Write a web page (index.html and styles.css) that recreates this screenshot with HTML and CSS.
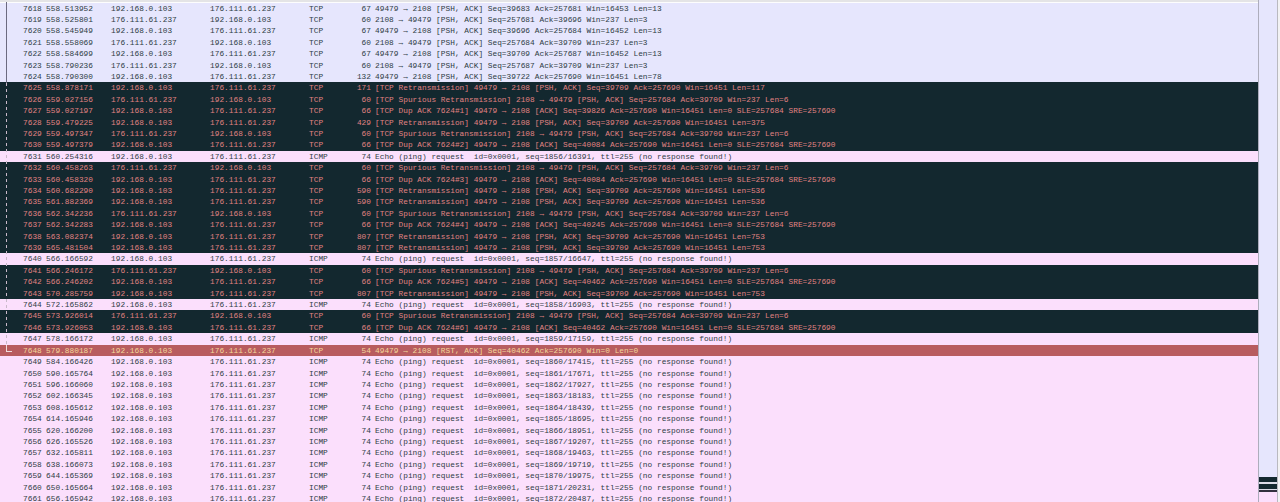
FILE: index.html
```html
<!DOCTYPE html>
<html lang="en">
<head>
<meta charset="utf-8">
<title>Packet list</title>
<link rel="stylesheet" href="styles.css">
</head>
<body>
<div class="window">
<main class="packets">
<div class="conv-solid"></div>
<div class="conv-dashed"></div>
<div class="conv-end"></div>
<div class="row tcp"><span class="no">7618</span><span class="time">558.513952</span><span class="addr">192.168.0.103</span><span class="addr">176.111.61.237</span><span class="proto">TCP</span><span class="len">67</span><span class="info">49479 → 2108 [PSH, ACK] Seq=39683 Ack=257681 Win=16453 Len=13</span></div>
<div class="row tcp"><span class="no">7619</span><span class="time">558.525801</span><span class="addr">176.111.61.237</span><span class="addr">192.168.0.103</span><span class="proto">TCP</span><span class="len">60</span><span class="info">2108 → 49479 [PSH, ACK] Seq=257681 Ack=39696 Win=237 Len=3</span></div>
<div class="row tcp"><span class="no">7620</span><span class="time">558.545949</span><span class="addr">192.168.0.103</span><span class="addr">176.111.61.237</span><span class="proto">TCP</span><span class="len">67</span><span class="info">49479 → 2108 [PSH, ACK] Seq=39696 Ack=257684 Win=16452 Len=13</span></div>
<div class="row tcp"><span class="no">7621</span><span class="time">558.558069</span><span class="addr">176.111.61.237</span><span class="addr">192.168.0.103</span><span class="proto">TCP</span><span class="len">60</span><span class="info">2108 → 49479 [PSH, ACK] Seq=257684 Ack=39709 Win=237 Len=3</span></div>
<div class="row tcp"><span class="no">7622</span><span class="time">558.584699</span><span class="addr">192.168.0.103</span><span class="addr">176.111.61.237</span><span class="proto">TCP</span><span class="len">67</span><span class="info">49479 → 2108 [PSH, ACK] Seq=39709 Ack=257687 Win=16452 Len=13</span></div>
<div class="row tcp"><span class="no">7623</span><span class="time">558.790236</span><span class="addr">176.111.61.237</span><span class="addr">192.168.0.103</span><span class="proto">TCP</span><span class="len">60</span><span class="info">2108 → 49479 [PSH, ACK] Seq=257687 Ack=39709 Win=237 Len=3</span></div>
<div class="row tcp"><span class="no">7624</span><span class="time">558.790300</span><span class="addr">192.168.0.103</span><span class="addr">176.111.61.237</span><span class="proto">TCP</span><span class="len">132</span><span class="info">49479 → 2108 [PSH, ACK] Seq=39722 Ack=257690 Win=16451 Len=78</span></div>
<div class="row bad"><span class="no">7625</span><span class="time">558.878171</span><span class="addr">192.168.0.103</span><span class="addr">176.111.61.237</span><span class="proto">TCP</span><span class="len">171</span><span class="info">[TCP Retransmission] 49479 → 2108 [PSH, ACK] Seq=39709 Ack=257690 Win=16451 Len=117</span></div>
<div class="row bad"><span class="no">7626</span><span class="time">559.027156</span><span class="addr">176.111.61.237</span><span class="addr">192.168.0.103</span><span class="proto">TCP</span><span class="len">60</span><span class="info">[TCP Spurious Retransmission] 2108 → 49479 [PSH, ACK] Seq=257684 Ack=39709 Win=237 Len=6</span></div>
<div class="row bad"><span class="no">7627</span><span class="time">559.027197</span><span class="addr">192.168.0.103</span><span class="addr">176.111.61.237</span><span class="proto">TCP</span><span class="len">66</span><span class="info">[TCP Dup ACK 7624#1] 49479 → 2108 [ACK] Seq=39826 Ack=257690 Win=16451 Len=0 SLE=257684 SRE=257690</span></div>
<div class="row bad"><span class="no">7628</span><span class="time">559.479225</span><span class="addr">192.168.0.103</span><span class="addr">176.111.61.237</span><span class="proto">TCP</span><span class="len">429</span><span class="info">[TCP Retransmission] 49479 → 2108 [PSH, ACK] Seq=39709 Ack=257690 Win=16451 Len=375</span></div>
<div class="row bad"><span class="no">7629</span><span class="time">559.497347</span><span class="addr">176.111.61.237</span><span class="addr">192.168.0.103</span><span class="proto">TCP</span><span class="len">60</span><span class="info">[TCP Spurious Retransmission] 2108 → 49479 [PSH, ACK] Seq=257684 Ack=39709 Win=237 Len=6</span></div>
<div class="row bad"><span class="no">7630</span><span class="time">559.497379</span><span class="addr">192.168.0.103</span><span class="addr">176.111.61.237</span><span class="proto">TCP</span><span class="len">66</span><span class="info">[TCP Dup ACK 7624#2] 49479 → 2108 [ACK] Seq=40084 Ack=257690 Win=16451 Len=0 SLE=257684 SRE=257690</span></div>
<div class="row icmp"><span class="no">7631</span><span class="time">560.254316</span><span class="addr">192.168.0.103</span><span class="addr">176.111.61.237</span><span class="proto">ICMP</span><span class="len">74</span><span class="info">Echo (ping) request  id=0x0001, seq=1856/16391, ttl=255 (no response found!)</span></div>
<div class="row bad"><span class="no">7632</span><span class="time">560.458263</span><span class="addr">176.111.61.237</span><span class="addr">192.168.0.103</span><span class="proto">TCP</span><span class="len">60</span><span class="info">[TCP Spurious Retransmission] 2108 → 49479 [PSH, ACK] Seq=257684 Ack=39709 Win=237 Len=6</span></div>
<div class="row bad"><span class="no">7633</span><span class="time">560.458320</span><span class="addr">192.168.0.103</span><span class="addr">176.111.61.237</span><span class="proto">TCP</span><span class="len">66</span><span class="info">[TCP Dup ACK 7624#3] 49479 → 2108 [ACK] Seq=40084 Ack=257690 Win=16451 Len=0 SLE=257684 SRE=257690</span></div>
<div class="row bad"><span class="no">7634</span><span class="time">560.682290</span><span class="addr">192.168.0.103</span><span class="addr">176.111.61.237</span><span class="proto">TCP</span><span class="len">590</span><span class="info">[TCP Retransmission] 49479 → 2108 [PSH, ACK] Seq=39709 Ack=257690 Win=16451 Len=536</span></div>
<div class="row bad"><span class="no">7635</span><span class="time">561.882369</span><span class="addr">192.168.0.103</span><span class="addr">176.111.61.237</span><span class="proto">TCP</span><span class="len">590</span><span class="info">[TCP Retransmission] 49479 → 2108 [PSH, ACK] Seq=39709 Ack=257690 Win=16451 Len=536</span></div>
<div class="row bad"><span class="no">7636</span><span class="time">562.342236</span><span class="addr">176.111.61.237</span><span class="addr">192.168.0.103</span><span class="proto">TCP</span><span class="len">60</span><span class="info">[TCP Spurious Retransmission] 2108 → 49479 [PSH, ACK] Seq=257684 Ack=39709 Win=237 Len=6</span></div>
<div class="row bad"><span class="no">7637</span><span class="time">562.342283</span><span class="addr">192.168.0.103</span><span class="addr">176.111.61.237</span><span class="proto">TCP</span><span class="len">66</span><span class="info">[TCP Dup ACK 7624#4] 49479 → 2108 [ACK] Seq=40245 Ack=257690 Win=16451 Len=0 SLE=257684 SRE=257690</span></div>
<div class="row bad"><span class="no">7638</span><span class="time">563.082374</span><span class="addr">192.168.0.103</span><span class="addr">176.111.61.237</span><span class="proto">TCP</span><span class="len">807</span><span class="info">[TCP Retransmission] 49479 → 2108 [PSH, ACK] Seq=39709 Ack=257690 Win=16451 Len=753</span></div>
<div class="row bad"><span class="no">7639</span><span class="time">565.481504</span><span class="addr">192.168.0.103</span><span class="addr">176.111.61.237</span><span class="proto">TCP</span><span class="len">807</span><span class="info">[TCP Retransmission] 49479 → 2108 [PSH, ACK] Seq=39709 Ack=257690 Win=16451 Len=753</span></div>
<div class="row icmp"><span class="no">7640</span><span class="time">566.166592</span><span class="addr">192.168.0.103</span><span class="addr">176.111.61.237</span><span class="proto">ICMP</span><span class="len">74</span><span class="info">Echo (ping) request  id=0x0001, seq=1857/16647, ttl=255 (no response found!)</span></div>
<div class="row bad"><span class="no">7641</span><span class="time">566.246172</span><span class="addr">176.111.61.237</span><span class="addr">192.168.0.103</span><span class="proto">TCP</span><span class="len">60</span><span class="info">[TCP Spurious Retransmission] 2108 → 49479 [PSH, ACK] Seq=257684 Ack=39709 Win=237 Len=6</span></div>
<div class="row bad"><span class="no">7642</span><span class="time">566.246202</span><span class="addr">192.168.0.103</span><span class="addr">176.111.61.237</span><span class="proto">TCP</span><span class="len">66</span><span class="info">[TCP Dup ACK 7624#5] 49479 → 2108 [ACK] Seq=40462 Ack=257690 Win=16451 Len=0 SLE=257684 SRE=257690</span></div>
<div class="row bad"><span class="no">7643</span><span class="time">570.285759</span><span class="addr">192.168.0.103</span><span class="addr">176.111.61.237</span><span class="proto">TCP</span><span class="len">807</span><span class="info">[TCP Retransmission] 49479 → 2108 [PSH, ACK] Seq=39709 Ack=257690 Win=16451 Len=753</span></div>
<div class="row icmp"><span class="no">7644</span><span class="time">572.165862</span><span class="addr">192.168.0.103</span><span class="addr">176.111.61.237</span><span class="proto">ICMP</span><span class="len">74</span><span class="info">Echo (ping) request  id=0x0001, seq=1858/16903, ttl=255 (no response found!)</span></div>
<div class="row bad"><span class="no">7645</span><span class="time">573.926014</span><span class="addr">176.111.61.237</span><span class="addr">192.168.0.103</span><span class="proto">TCP</span><span class="len">60</span><span class="info">[TCP Spurious Retransmission] 2108 → 49479 [PSH, ACK] Seq=257684 Ack=39709 Win=237 Len=6</span></div>
<div class="row bad"><span class="no">7646</span><span class="time">573.926053</span><span class="addr">192.168.0.103</span><span class="addr">176.111.61.237</span><span class="proto">TCP</span><span class="len">66</span><span class="info">[TCP Dup ACK 7624#6] 49479 → 2108 [ACK] Seq=40462 Ack=257690 Win=16451 Len=0 SLE=257684 SRE=257690</span></div>
<div class="row icmp"><span class="no">7647</span><span class="time">578.166172</span><span class="addr">192.168.0.103</span><span class="addr">176.111.61.237</span><span class="proto">ICMP</span><span class="len">74</span><span class="info">Echo (ping) request  id=0x0001, seq=1859/17159, ttl=255 (no response found!)</span></div>
<div class="row rst"><span class="no">7648</span><span class="time">579.880187</span><span class="addr">192.168.0.103</span><span class="addr">176.111.61.237</span><span class="proto">TCP</span><span class="len">54</span><span class="info">49479 → 2108 [RST, ACK] Seq=40462 Ack=257690 Win=0 Len=0</span></div>
<div class="row icmp"><span class="no">7649</span><span class="time">584.166426</span><span class="addr">192.168.0.103</span><span class="addr">176.111.61.237</span><span class="proto">ICMP</span><span class="len">74</span><span class="info">Echo (ping) request  id=0x0001, seq=1860/17415, ttl=255 (no response found!)</span></div>
<div class="row icmp"><span class="no">7650</span><span class="time">590.165764</span><span class="addr">192.168.0.103</span><span class="addr">176.111.61.237</span><span class="proto">ICMP</span><span class="len">74</span><span class="info">Echo (ping) request  id=0x0001, seq=1861/17671, ttl=255 (no response found!)</span></div>
<div class="row icmp"><span class="no">7651</span><span class="time">596.166060</span><span class="addr">192.168.0.103</span><span class="addr">176.111.61.237</span><span class="proto">ICMP</span><span class="len">74</span><span class="info">Echo (ping) request  id=0x0001, seq=1862/17927, ttl=255 (no response found!)</span></div>
<div class="row icmp"><span class="no">7652</span><span class="time">602.166345</span><span class="addr">192.168.0.103</span><span class="addr">176.111.61.237</span><span class="proto">ICMP</span><span class="len">74</span><span class="info">Echo (ping) request  id=0x0001, seq=1863/18183, ttl=255 (no response found!)</span></div>
<div class="row icmp"><span class="no">7653</span><span class="time">608.165612</span><span class="addr">192.168.0.103</span><span class="addr">176.111.61.237</span><span class="proto">ICMP</span><span class="len">74</span><span class="info">Echo (ping) request  id=0x0001, seq=1864/18439, ttl=255 (no response found!)</span></div>
<div class="row icmp"><span class="no">7654</span><span class="time">614.165946</span><span class="addr">192.168.0.103</span><span class="addr">176.111.61.237</span><span class="proto">ICMP</span><span class="len">74</span><span class="info">Echo (ping) request  id=0x0001, seq=1865/18695, ttl=255 (no response found!)</span></div>
<div class="row icmp"><span class="no">7655</span><span class="time">620.166200</span><span class="addr">192.168.0.103</span><span class="addr">176.111.61.237</span><span class="proto">ICMP</span><span class="len">74</span><span class="info">Echo (ping) request  id=0x0001, seq=1866/18951, ttl=255 (no response found!)</span></div>
<div class="row icmp"><span class="no">7656</span><span class="time">626.165526</span><span class="addr">192.168.0.103</span><span class="addr">176.111.61.237</span><span class="proto">ICMP</span><span class="len">74</span><span class="info">Echo (ping) request  id=0x0001, seq=1867/19207, ttl=255 (no response found!)</span></div>
<div class="row icmp"><span class="no">7657</span><span class="time">632.165811</span><span class="addr">192.168.0.103</span><span class="addr">176.111.61.237</span><span class="proto">ICMP</span><span class="len">74</span><span class="info">Echo (ping) request  id=0x0001, seq=1868/19463, ttl=255 (no response found!)</span></div>
<div class="row icmp"><span class="no">7658</span><span class="time">638.166073</span><span class="addr">192.168.0.103</span><span class="addr">176.111.61.237</span><span class="proto">ICMP</span><span class="len">74</span><span class="info">Echo (ping) request  id=0x0001, seq=1869/19719, ttl=255 (no response found!)</span></div>
<div class="row icmp"><span class="no">7659</span><span class="time">644.165369</span><span class="addr">192.168.0.103</span><span class="addr">176.111.61.237</span><span class="proto">ICMP</span><span class="len">74</span><span class="info">Echo (ping) request  id=0x0001, seq=1870/19975, ttl=255 (no response found!)</span></div>
<div class="row icmp"><span class="no">7660</span><span class="time">650.165664</span><span class="addr">192.168.0.103</span><span class="addr">176.111.61.237</span><span class="proto">ICMP</span><span class="len">74</span><span class="info">Echo (ping) request  id=0x0001, seq=1871/20231, ttl=255 (no response found!)</span></div>
<div class="row icmp"><span class="no">7661</span><span class="time">656.165942</span><span class="addr">192.168.0.103</span><span class="addr">176.111.61.237</span><span class="proto">ICMP</span><span class="len">74</span><span class="info">Echo (ping) request  id=0x0001, seq=1872/20487, ttl=255 (no response found!)</span></div>
</main>
<aside class="minimap">
<div class="map-fill"></div>
<div class="map-dark"></div>
<div class="map-gap"></div>
<div class="map-dark"></div>
<div class="map-gap thin"></div>
<div class="map-dark thin"></div>
<div class="map-pink"></div>
</aside>
<div class="edge"></div>
</div>
</body>
</html>
```

FILE: styles.css
```css
html, body {
  margin: 0;
  padding: 0;
  height: 502px;
  overflow: hidden;
  background: #f2f2f4;
}

.window {
  display: flex;
  width: 1280px;
  height: 502px;
  overflow: hidden;
}

.packets {
  position: relative;
  flex: 0 0 1258px;
  height: 502px;
  padding-top: 0.5px;
  box-sizing: border-box;
  overflow: hidden;
  background: #fdfdfd;
  border-top: 2px solid #e4e4e6;
  background-clip: padding-box;
  font-family: "Liberation Mono", "DejaVu Sans Mono", monospace;
  font-size: 7.8px;
  letter-spacing: 0.02px;
}

.row {
  display: flex;
  height: 11.42px;
  line-height: 13.4px;
  padding-left: 23px;
  white-space: pre;
}

.row span {
  display: block;
  flex: none;
}

.tcp {
  background: #e6e6fd;
  color: #2f3d45;
}

.bad {
  background: #13282f;
  color: #e08282;
}

.icmp {
  background: #fbdffc;
  color: #2f3d45;
}

.rst {
  background: #b85c5f;
  color: #f4d79a;
}

.no { width: 23px; }
.time { width: 65px; }
.addr { width: 99px; }
.proto { width: 37px; }
.len { width: 25px; text-align: right; }
.info { margin-left: 4px; }

.conv-solid {
  position: absolute;
  left: 6px;
  top: 0;
  width: 1px;
  height: 81px;
  background: #6c6a80;
}

.conv-dashed {
  position: absolute;
  left: 6px;
  top: 81px;
  width: 1px;
  height: 265px;
  background: repeating-linear-gradient(#c9b9c9 0 3px, transparent 3px 6px);
}

.conv-end {
  position: absolute;
  left: 6px;
  top: 343px;
  width: 5px;
  height: 6px;
  border-left: 1px solid #f0dcdc;
  border-bottom: 1px solid #f0dcdc;
}

.minimap {
  display: flex;
  flex-direction: column;
  flex: 0 0 18px;
  height: 502px;
  border-left: 1px solid #adadbc;
  border-right: 1px solid #b9b9c0;
  background: #e6e6fd;
}

.map-fill { height: 477px; flex: none; }
.map-dark { height: 5px; flex: none; background: #13282f; }
.map-gap { height: 2px; flex: none; background: #dcdce8; }
.map-dark.thin { height: 2px; background: #33303f; }
.map-gap.thin { height: 1px; }
.map-pink { flex: 1; background: #fbdffc; }

.edge {
  flex: 1;
  background: #f2f2f4;
}
```
